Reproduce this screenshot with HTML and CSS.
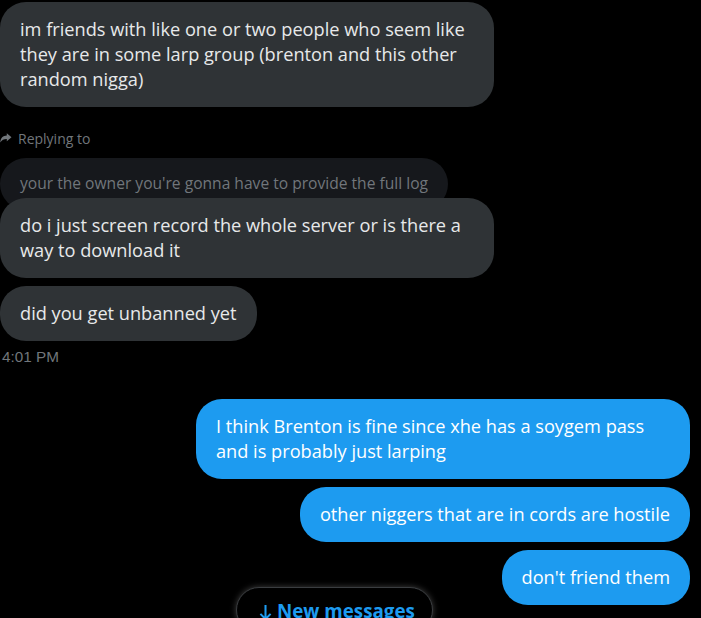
FILE: index.html
```html
<!DOCTYPE html>
<html>
<head>
<meta charset="utf-8">
<link rel="stylesheet" href="styles.css">
</head>
<body>
<div class="chat">
  <div class="bubble in w-wide">im friends with like one or two people who seem like they are in some larp group (brenton and this other random nigga)</div>

  <div class="reply-group">
    <div class="reply-label">
      <svg class="reply-icon" viewBox="0 0 12 10" width="12" height="10"><path d="M11.5 4.2 L6.8 0.3 V2.6 C3 2.8 0.6 5 0.2 9.6 C1.8 7.2 3.8 6.1 6.8 6.1 V8.3 Z" fill="#71767b"/></svg>
      <span>Replying to</span>
    </div>
    <div class="quote">your the owner you're gonna have to provide the full log</div>
    <div class="bubble in w-wide over">do i just screen record the whole server or is there a way to download it</div>
  </div>

  <div class="bubble in">did you get unbanned yet</div>
  <div class="time">4:01 PM</div>

  <div class="out-group">
    <div class="bubble out w-wide">I think Brenton is fine since xhe has a soygem pass and is probably just larping</div>
    <div class="bubble out">other niggers that are in cords are hostile</div>
    <div class="bubble out">don't friend them</div>
  </div>
</div>
<div class="new-pill"><svg class="arrow" viewBox="0 0 14 18" width="13" height="17"><path d="M7 1 V16 M1.5 10.5 L7 16 L12.5 10.5" fill="none" stroke="#1d9bf0" stroke-width="2.2"/></svg><span>New messages</span></div>
</body>
</html>
```
FILE: styles.css
```css
html, body {
  margin: 0;
  padding: 0;
  background: #000;
  width: 701px;
  height: 618px;
  overflow: hidden;
}
body {
  font-family: "Open Sans", "Noto Sans", sans-serif;
  position: relative;
}
.chat {
  display: flex;
  flex-direction: column;
  align-items: flex-start;
  padding-top: 2px;
}
.bubble {
  box-sizing: border-box;
  font-size: 18.2px;
  line-height: 25px;
  padding: 15px 20px 15px 20px;
  border-radius: 26px;
  color: #e7e9ea;
  max-width: 494px;
}
.bubble.in {
  background: #2f3336;
}
.w-wide {
  width: 494px;
}
.reply-group {
  display: flex;
  flex-direction: column;
  align-items: flex-start;
  margin-top: 21px;
}
.reply-label {
  display: flex;
  align-items: center;
  gap: 6px;
  height: 20px;
  font-size: 14px;
  color: #71767b;
  margin-bottom: 10px;
}
.reply-icon {
  display: block;
}
.quote {
  box-sizing: border-box;
  width: 448px;
  background: #16181c;
  color: #71767b;
  font-size: 15.6px;
  line-height: 22px;
  padding: 14px 20px 16px 20px;
  border-radius: 26px;
  margin-bottom: -12px;
  white-space: nowrap;
}
.over {
  position: relative;
}
.reply-group + .bubble {
  margin-top: 8px;
}
.time {
  font-family: "Liberation Sans", Arial, sans-serif;
  font-size: 15.3px;
  color: #71767b;
  margin: 7px 0 0 2px;
  line-height: 18px;
}
.out-group {
  align-self: stretch;
  display: flex;
  flex-direction: column;
  align-items: flex-end;
  gap: 8px;
  margin: 33px 11px 0 0;
}
.bubble.out {
  background: #1d9bf0;
  color: #fff;
}
.new-pill {
  position: absolute;
  left: 236px;
  top: 587px;
  box-sizing: border-box;
  width: 197px;
  height: 46px;
  padding: 12px 0 0 22px;
  display: flex;
  align-items: flex-start;
  gap: 5px;
  background: #000;
  border: 1px solid #3a3d40;
  border-radius: 23px;
  box-shadow: 0 0 6px rgba(255, 255, 255, 0.25);
  color: #1d9bf0;
  font-family: "Open Sans", sans-serif;
  font-weight: 700;
  font-size: 18.8px;
  line-height: 22px;
  white-space: nowrap;
}
.arrow {
  display: block;
  margin-top: 4px;
}
```
